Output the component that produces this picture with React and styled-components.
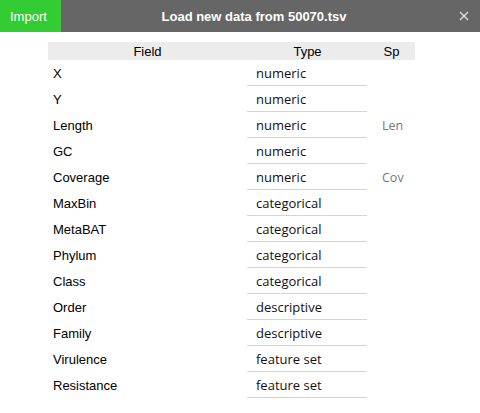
import React from 'react'
import styled, { createGlobalStyle } from 'styled-components'

const GlobalStyle = createGlobalStyle`
  body {
    margin: 0;
    background: #ffffff;
    font-family: 'Liberation Sans', Arial, sans-serif;
    overflow: hidden;
  }
`

const fields = [
  { name: 'X', type: 'numeric' },
  { name: 'Y', type: 'numeric' },
  { name: 'Length', type: 'numeric', extra: 'Len' },
  { name: 'GC', type: 'numeric' },
  { name: 'Coverage', type: 'numeric', extra: 'Cov' },
  { name: 'MaxBin', type: 'categorical' },
  { name: 'MetaBAT', type: 'categorical' },
  { name: 'Phylum', type: 'categorical' },
  { name: 'Class', type: 'categorical' },
  { name: 'Order', type: 'descriptive' },
  { name: 'Family', type: 'descriptive' },
  { name: 'Virulence', type: 'feature set' },
  { name: 'Resistance', type: 'feature set' },
]

const Page = styled.div`
  width: 480px;
  height: 413px;
  overflow: hidden;
`

const TitleBar = styled.div`
  display: flex;
  align-items: center;
  height: 32px;
  background: #666666;
  color: #ffffff;
  font-size: 13px;
`

const ImportButton = styled.div`
  display: flex;
  align-items: center;
  width: 61px;
  height: 100%;
  padding-left: 10px;
  box-sizing: border-box;
  background: #33cc33;
  color: #ffffff;
`

const Title = styled.div`
  flex: 1;
  text-align: center;
  font-weight: bold;
`

const CloseButton = styled.div`
  display: flex;
  align-items: center;
  justify-content: center;
  width: 33px;
  height: 100%;
`

const Body = styled.div`
  padding: 10px 0 0 48px;
`

const Table = styled.table`
  border-collapse: collapse;
  table-layout: fixed;
  width: 367px;
  font-size: 13px;
  color: #000000;
`

const HeadCell = styled.th`
  height: 18px;
  padding: 0;
  background: #ececec;
  font-weight: normal;
  text-align: center;
  width: ${p => p.$width}px;
  overflow: hidden;
  white-space: nowrap;
`

const FieldCell = styled.td`
  height: 26px;
  padding: 0 0 0 5px;
  vertical-align: middle;
`

const TypeCell = styled.td`
  height: 26px;
  padding: 0;
`

const TypeBox = styled.div`
  display: flex;
  align-items: center;
  height: 25px;
  width: 120px;
  padding: 1px 0 0 9px;
  box-sizing: border-box;
  border-bottom: 1px solid #d4d4d4;
  font-family: 'Open Sans', 'DejaVu Sans', sans-serif;
  font-size: 13px;
  color: #111111;
`

const ExtraCell = styled.td`
  height: 26px;
  padding: 0 0 0 14px;
  color: #777777;
  overflow: hidden;
  white-space: nowrap;
  font-family: 'Open Sans', 'DejaVu Sans', sans-serif;
  font-size: 12.5px;
`

const CloseIcon = () => (
  <svg width="10" height="10" viewBox="0 0 10 10">
    <path d="M1 1L9 9M9 1L1 9" stroke="#e4e4e4" strokeWidth="1.3" fill="none" />
  </svg>
)

const App = () => (
  <Page>
    <GlobalStyle />
    <TitleBar>
      <ImportButton>Import</ImportButton>
      <Title>Load new data from 50070.tsv</Title>
      <CloseButton>
        <CloseIcon />
      </CloseButton>
    </TitleBar>
    <Body>
      <Table>
        <thead>
          <tr>
            <HeadCell $width={199}>Field</HeadCell>
            <HeadCell $width={121}>Type</HeadCell>
            <HeadCell $width={47}>Sp</HeadCell>
          </tr>
        </thead>
        <tbody>
          {fields.map(f => (
            <tr key={f.name}>
              <FieldCell>{f.name}</FieldCell>
              <TypeCell>
                <TypeBox>{f.type}</TypeBox>
              </TypeCell>
              <ExtraCell>{f.extra}</ExtraCell>
            </tr>
          ))}
        </tbody>
      </Table>
    </Body>
  </Page>
)

export default App
